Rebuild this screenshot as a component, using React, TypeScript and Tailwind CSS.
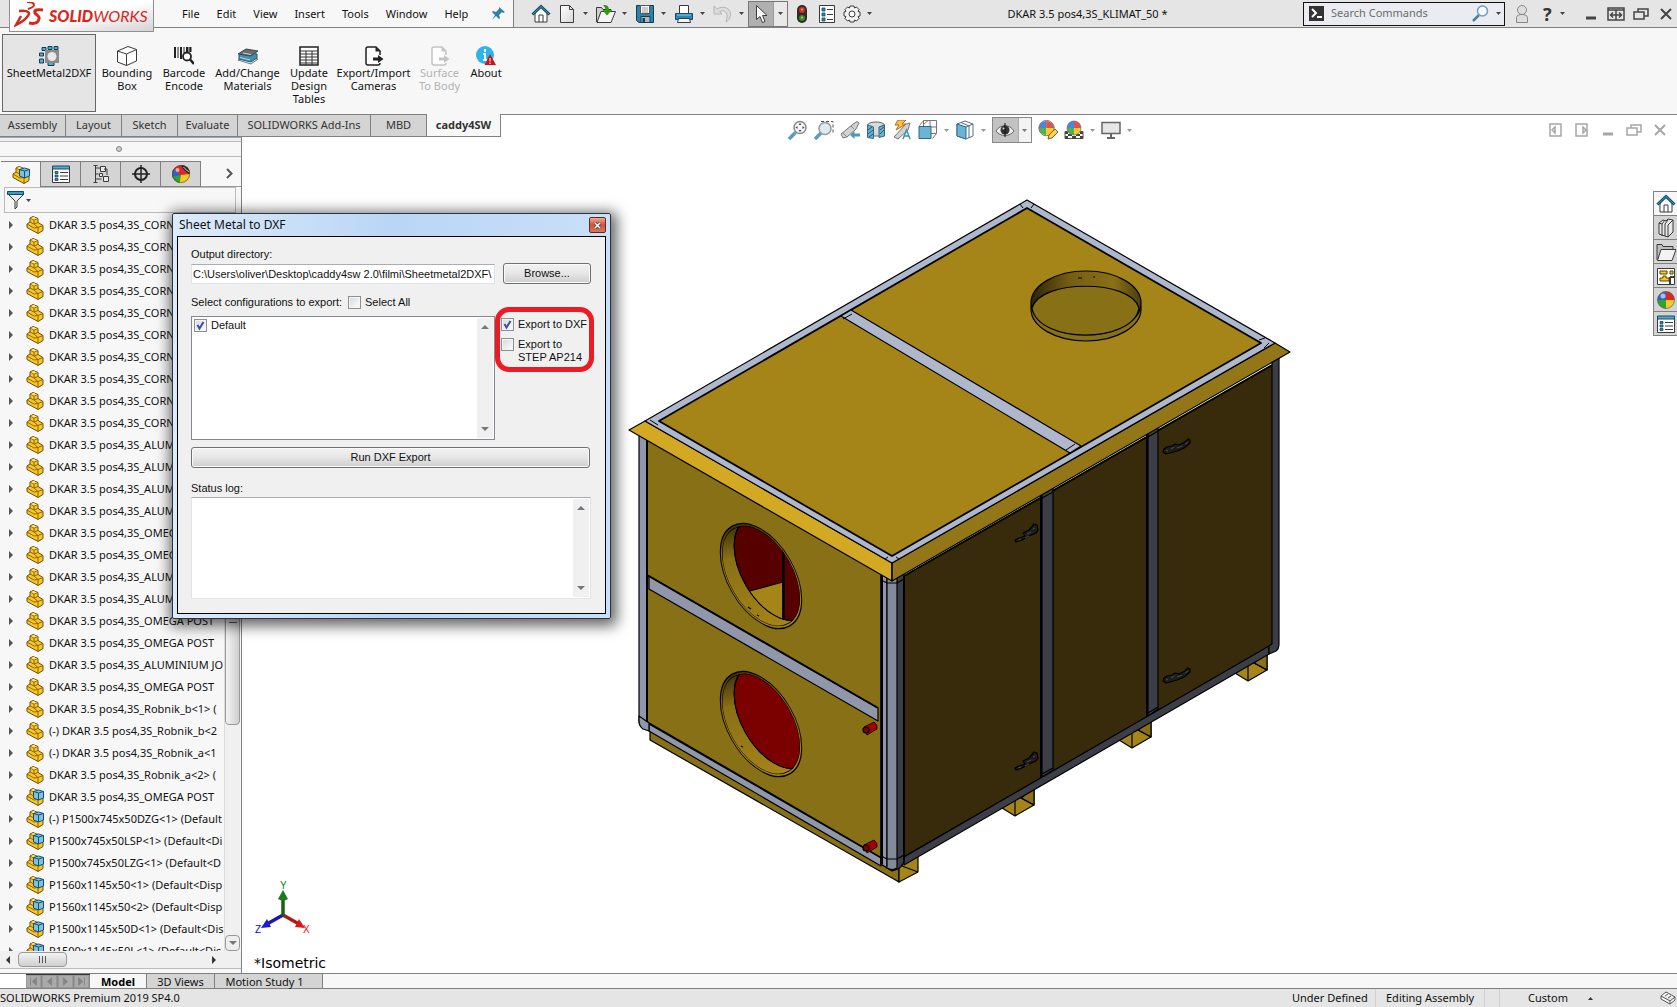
import { ReactNode } from 'react';
import { clsx } from 'clsx';

const line = '#3a3a3a';
const blue = '#2b87b3';

interface IconProps {
  size?: number;
  children: ReactNode;
}

function Icon({ size = 20, children }: IconProps) {
  return (
    <svg width={size} height={size} viewBox="0 0 20 20" fill="none" className="shrink-0" aria-hidden="true">
      {children}
    </svg>
  );
}

function Caret({ color = '#444' }: { color?: string }) {
  return (
    <svg width="5" height="3" viewBox="0 0 5 3" className="shrink-0" aria-hidden="true">
      <path d="M0 0h5L2.500 3z" fill={color} />
    </svg>
  );
}

/* ---------- icons ---------- */

const HomeIcon = () => (
  <Icon>
    <path d="M4 9v9h12V9l-6-6z" fill="#fff" stroke={line} />
    <path d="M8 18v-7h4v7" stroke={line} />
    <path d="M1.500 10.500L10 2.500l8.500 8" stroke="#134b66" strokeWidth="3" />
    <path d="M2 10l8-7.500L18 10" stroke="#3f9ac4" strokeWidth="1" />
  </Icon>
);

const NewIcon = () => (
  <Icon>
    <defs>
      <linearGradient id="paper" x1="0" y1="0" x2="1" y2="1">
        <stop offset="0" stopColor="#fff" />
        <stop offset="1" stopColor="#d8d8d8" />
      </linearGradient>
    </defs>
    <path d="M3.500 1.500h9l4 4v13h-13z" fill="url(#paper)" stroke={line} />
    <path d="M12.500 1.500v4h4" stroke={line} />
  </Icon>
);

const OpenIcon = () => (
  <Icon>
    <path d="M.5 18V3.500h5l1.500 2h8V8" fill="#d0d0d0" stroke={line} />
    <path d="M1 18.500L5 7.500h14.500l-4.500 11z" fill="#f5f5f5" stroke={line} />
    <path d="M7 1c4-.5 6 1 6 5h3l-5 5.500L6.500 6h3c0-2-1-3.500-2.500-5z" fill="#2f9a0c" />
  </Icon>
);

const SaveIcon = () => (
  <Icon>
    <path d="M1.500 1.500h17v17H4l-2.500-2z" fill="#3180a8" stroke="#123e54" />
    <path d="M5.500 1.500h9v8h-9z" fill="#fff" stroke="#555" />
    <path d="M7 4h6M7 6h6M7 8h6" stroke="#999" />
    <path d="M6 12.500h9v6H6z" fill="#a9bcc5" stroke="#123e54" />
    <path d="M7.500 14h2.500v4H7.500z" fill="#123e54" />
  </Icon>
);

const PrintIcon = () => (
  <Icon>
    <path d="M5.500 1.500h9v8h-9z" fill="#fff" stroke={line} />
    <path d="M1.500 9.500h17v6h-17z" fill="#2b87b3" stroke="#174a62" />
    <path d="M3 11h14" stroke="#8ccbe8" />
    <path d="M4.500 14.500h11l1 4h-13z" fill="#f5f5f5" stroke={line} />
  </Icon>
);

const UndoIcon = () => (
  <Icon>
    <path d="M1 2v8h8L6.500 7.500C11 5.500 15 8 14 14l-1 4c5-3 6-10 2-13C11.500 2.500 7 3 4 5z" fill="#dcdcdc" stroke="#b5b5b5" />
  </Icon>
);

const CursorIcon = () => (
  <Icon>
    <path d="M5.500 1.500v14l3.500-3 2.500 6 2.500-1-2.500-6h4.500z" fill="#fff" stroke="#3d3d3d" />
  </Icon>
);

const TrafficIcon = () => (
  <Icon>
    <rect x="5" y="1" width="10" height="18" rx="5" fill="#2c2c2c" />
    <circle cx="10" cy="6" r="3" fill="#d92b1c" />
    <circle cx="10" cy="14" r="3" fill="#3e8a1d" />
    <circle cx="10" cy="5.500" r="1" fill="#ff9b8c" />
    <circle cx="10" cy="13.500" r="1" fill="#9fd97d" />
  </Icon>
);

const OptionsIcon = () => (
  <Icon>
    <path d="M2.500 1.500h15v17h-15z" fill="#fff" stroke={line} />
    <path d="M5 4h3v3H5zM5 9h3v3H5zM5 14h3v3H5z" fill={blue} stroke="#174a62" strokeWidth=".8" />
    <path d="M10 5.500h6M10 10.500h6M10 15.500h6" stroke={line} />
  </Icon>
);

const GearIcon = () => (
  <Icon>
    <path
      d="M8 2h4l.5 2 2-1 2.500 2.500-1 2 2 .5v4l-2 .5 1 2-2.500 2.500-2-1-.5 2H8l-.5-2-2 1L3 14.500l1-2-2-.5V8l2-.5-1-2L5.500 3l2 1z"
      fill="#f2f2f2"
      stroke={line}
    />
    <circle cx="10" cy="10" r="3" stroke={line} fill="#fff" />
  </Icon>
);

const ListIcon = () => (
  <Icon>
    <path d="M1.500 2.500h17v16h-17z" fill="#fff" stroke={line} />
    <path d="M1.500 2h17v3h-17z" fill="#56a9cd" stroke="#174a62" />
    <path d="M4 7.500h3v2H4zM4 11h3v2H4zM4 14.500h3v2H4z" fill={blue} stroke="#174a62" strokeWidth=".8" />
    <path d="M9 8.500h8M9 12h8M9 15.500h8" stroke={line} />
  </Icon>
);

const SphereIcon = () => (
  <Icon>
    <path d="M10 10V1.500A8.500 8.500 0 0 0 1.500 10z" fill="#2f62c9" />
    <path d="M10 10h8.500A8.500 8.500 0 0 0 10 1.500z" fill="#dc2a22" />
    <path d="M10 10H1.500A8.500 8.500 0 0 0 10 18.500z" fill="#2fa52a" />
    <path d="M10 10v8.500a8.500 8.500 0 0 0 8.500-8.500z" fill="#f2cd2a" />
    <circle cx="10" cy="10" r="8.500" stroke="#444" strokeOpacity=".6" />
    <circle cx="7" cy="6" r="2.500" fill="#fff" fillOpacity=".6" />
  </Icon>
);

const AppearanceIcon = () => (
  <Icon>
    <circle cx="10" cy="10" r="9" fill="#dc2a22" />
    <path d="M10 11L2.500 5A9 9 0 0 0 2 14z" fill="#2f62c9" />
    <path d="M10 11l-8.500 2a9 9 0 0 0 7 6z" fill="#2fa52a" />
    <path d="M10 11l-1.500 8A9 9 0 0 0 19 10z" fill="#f2cd2a" />
    <path d="M10 1.500c5-1 9 3 9 8.500-3-1-7-4-9-8.500z" fill="#222" />
    <path d="M12.500 3c2 2.500 4 4 6 5" stroke="#ddd" />
    <circle cx="10" cy="10" r="8.500" stroke="#444" strokeOpacity=".6" />
    <circle cx="6.500" cy="6" r="2" fill="#fff" fillOpacity=".6" />
  </Icon>
);

const TreeIcon = () => (
  <Icon>
    <path d="M4.500 1v18M4.500 4h5M4.500 10h3M4.500 15h6M2.500 1.500h4M2.500 18.500h4" stroke={line} />
    <path d="M9.500 2.500h5v5h-5zM8.500 9.500h3v3h-3zM12.500 12.500h5v5h-5z" fill="#ececec" stroke={line} />
    <path d="M13 5h3v6" stroke={line} />
  </Icon>
);

const TargetIcon = () => (
  <Icon>
    <circle cx="10" cy="10" r="6" stroke="#222" strokeWidth="2" />
    <path d="M10 1v18M1 10h18" stroke="#222" strokeWidth="1.500" />
  </Icon>
);

const PartIcon = ({ assembly = false }: { assembly?: boolean }) => (
  <svg width="18" height="18" viewBox="0 0 18 18" className="shrink-0" aria-hidden="true">
    <path d="M1 8l3-2V2l3-1.500 5 2v4l5 3v5L12 17.500 1 11.500z" fill="#f9c720" stroke="#6b4e0c" />
    <path d="M8 4v4l4 3.500v6" fill="none" stroke="#8a6712" />
    <path d="M4 2l4 2 4-1.500M1 8l7 4 4-.5 5-2M4 6l4 2 4-1.500" fill="none" stroke="#8a6712" />
    <path d="M5 2l2.500-1 3.500 1.500L8 3.500z" fill="#ffe67a" />
    {assembly && (
      <>
        <path d="M7.500 3.500l5-1.500 5 1.500V10L12.500 12l-5-2z" fill="#7cc0e2" stroke="#16506e" />
        <path d="M7.500 3.500l5 1.500 5-1.500M12.500 5v7" fill="none" stroke="#16506e" />
      </>
    )}
  </svg>
);

const SheetMetalIcon = () => (
  <Icon>
    <path d="M3 1.500h4v3H3zM9 .5h4v3H9zM15 .5h4v3h-4zM.5 7h4v3h-4zM.5 13h4v4h-4zM9 16.500h6v3H9z" fill="#56a9cd" stroke="#123e54" />
    <path d="M6 4h14v13H6z" fill="#8b8b8b" />
    <circle cx="13" cy="10.500" r="4.500" fill="#e8e8e8" />
  </Icon>
);

const BoxIcon = () => (
  <Icon>
    <path d="M.5 5L11 .5l8.500 3V15l-10 4.500L.5 16z" fill="#fff" stroke={line} />
    <path d="M.5 5l9 3 10-4.500M9.500 8v11.500" stroke={line} />
  </Icon>
);

const BarcodeIcon = () => (
  <Icon>
    <path d="M1 1v11M7 1v12M13 1v5M16.500 1v5" stroke="#222" strokeWidth="2" />
    <path d="M4 1v11M10 1v6M15 1v5" stroke="#222" />
    <circle cx="13" cy="10.500" r="4" stroke="#222" strokeWidth="1.800" fill="#fff" />
    <path d="M16 13.500l4 4.500" stroke="#222" strokeWidth="2.500" />
  </Icon>
);

const MaterialsIcon = () => (
  <Icon>
    <path d="M0 14l8-4 12 3-7 5z" fill="#f0f0f0" stroke="#777" />
    <path d="M1 9l7-3 11 2v4l-6 4-12-3z" fill="#3f90b5" stroke="#205a75" />
    <path d="M0 8l8-5 12 2-7 5z" fill="#6c6c6c" stroke="#444" />
    <path d="M2 11.500l10 2.500M5 7l8 1.500" stroke="#aaddee" />
  </Icon>
);

const TableIcon = () => (
  <Icon>
    <path d="M1 1h18v18H1z" fill="#fff" stroke="#222" strokeWidth="1.500" />
    <path d="M1 5h18M1 8h18M1 11h18M1 14h18M1 17h18M7 5v14M13 5v14" stroke="#333" />
  </Icon>
);

const ExportIcon = ({ muted = false }: { muted?: boolean }) => {
  const color = muted ? '#c4c4c4' : '#222';
  return (
    <Icon>
      <path d="M16 9V5l-4-4H4a2 2 0 0 0-2 2v14a2 2 0 0 0 2 2h10a2 2 0 0 0 2-2" fill="#fff" stroke={color} strokeWidth="1.500" />
      <path d="M11.500 1v4.500H16z" fill={color} />
      <path d="M9 11.500h5V9l5.500 4-5.500 4v-2.500H9z" fill={color} />
    </Icon>
  );
};

const AboutIcon = () => (
  <Icon>
    <circle cx="9" cy="9" r="9" fill="#2fb4ea" />
    <path d="M9 3v3M7 8h2v6M7 14h4" stroke="#fff" strokeWidth="2" />
    <path d="M14 8l6 11H8.500z" fill="#c5161d" />
    <path d="M14 12v3.500M14 16.500v1.500" stroke="#fff" />
  </Icon>
);

const ZoomFitIcon = () => (
  <Icon>
    <path d="M1 19l6.500-6.500" stroke="#5a9dbd" strokeWidth="3.500" />
    <circle cx="12" cy="7.500" r="6" fill="#f4f8fa" stroke="#888" strokeWidth="1.500" />
    <path d="M12 3l1.500 2h-3zM12 12l1.500-2h-3zM7.500 7.500l2-1.500v3zM16.500 7.500l-2-1.500v3z" fill="#444" />
  </Icon>
);

const ZoomAreaIcon = () => (
  <Icon>
    <path d="M7 1.500h12v12" stroke="#555" strokeDasharray="3 2" />
    <path d="M1 19l6-6" stroke="#5a9dbd" strokeWidth="3.500" />
    <circle cx="11" cy="8.500" r="6" fill="#dcebf2" stroke="#999" strokeWidth="1.500" />
  </Icon>
);

const PreviousViewIcon = () => (
  <Icon>
    <path d="M1 14l11-9 5-3.500 2 1.500-3 6-9 8-4 1z" fill="#d2d2d2" stroke="#777" />
    <path d="M3 13l4 4M11 6l3 3" stroke="#888" />
    <path d="M10 15l4.500-4v2.500H20v3h-5.500V19z" fill="#4b98bd" />
  </Icon>
);

const SectionIcon = () => (
  <Icon>
    <path d="M1.500 5c1-4 16-4 17 0l-5 2v9H7V8z" fill="#d9d9d9" stroke="#666" />
    <path d="M1.500 5l6 2v11.500l-6-1zM13 7l5.500-2v11L13 17.500z" fill="#6fb1d0" stroke="#2d6a88" />
    <path d="M2 10l4-3M2 14l5-4M3 17l4-3M14 10l4-3M14 14l4-4" stroke="#24566e" />
  </Icon>
);

const DynamicIcon = () => (
  <Icon>
    <path d="M2 17L14 4l4-1-2 7-10 9z" fill="#d2d2d2" stroke="#777" />
    <path d="M6 0h8l-4 4h4L4 10l3-5H3z" fill="#f9c33c" stroke="#b8672a" />
    <path d="M11 19l3.500-9 3.500 9M12.500 16h4.500" stroke="#3f90b5" strokeWidth="1.500" />
  </Icon>
);

const OrientationIcon = () => (
  <Icon>
    <path d="M5.500.500h13v13h-13zM1.500 5.500l4-5M14.500 18.500l4-5M12 1v17M6 7h13M10 .5L5 5" stroke="#777" />
    <path d="M1 6.500h12v12H1z" fill="#6db3d6" stroke="#2d6a88" />
  </Icon>
);

const DisplayIcon = () => (
  <Icon>
    <path d="M2 4l8-3 8 3v12l-7 3-9-3z" fill="#fff" stroke="#56707c" />
    <path d="M2 4l9 3v12l-9-3z" fill="#6db3d6" stroke="#2d6a88" />
    <path d="M11 7l7-3M6 2.500L14 6v12" stroke="#56707c" />
  </Icon>
);

const EyeIcon = () => (
  <Icon>
    <path d="M1 11c4-7 14-7 18 0-4 6-14 6-18 0z" fill="#eee" stroke="#666" />
    <circle cx="10" cy="10" r="4.500" fill="#333" />
    <path d="M10 3v14" stroke="#111" />
    <circle cx="8.500" cy="8.500" r="1" fill="#ddd" />
  </Icon>
);

const EditAppearanceIcon = () => (
  <Icon>
    <g transform="scale(.9)">
      <path d="M9 9V1a8 8 0 0 0-8 8z" fill="#4a86e0" />
      <path d="M9 9h9a9 9 0 0 0-9-8z" fill="#e0524b" />
      <path d="M9 9H1a9 9 0 0 0 8 8z" fill="#50b348" />
      <path d="M9 9v8a9 9 0 0 0 9-8z" fill="#f2cd2a" />
      <circle cx="9.500" cy="9" r="8.500" stroke="#666" />
    </g>
    <path d="M10 19l1-4 6-6 3 3-6 6z" fill="#f6d35c" stroke="#8a5a12" />
  </Icon>
);

const SceneIcon = () => (
  <Icon>
    <path d="M1 11.500h18v7H1z" fill="#fff" stroke="#555" />
    <path d="M1 12h3v2H1zM16 12h3v2h-3zM4 14h4v2H4zM12 14h4v2h-4zM1 16h3v3H1zM8 16h4v3H8zM16 16h3v3h-3z" fill="#444" />
    <path d="M10 8V1a7 7 0 0 0-7 7z" fill="#4a86e0" />
    <path d="M10 8h7a7 7 0 0 0-7-7z" fill="#e0524b" />
    <path d="M10 8H3a7 7 0 0 0 7 7z" fill="#50b348" />
    <path d="M10 8v7a7 7 0 0 0 7-7z" fill="#f2cd2a" />
    <circle cx="10" cy="8" r="7" stroke="#666" strokeOpacity=".7" />
  </Icon>
);

const MonitorIcon = () => (
  <Icon>
    <path d="M1 2.500h18v11H1z" fill="#e6e6e6" stroke="#666" strokeWidth="1.500" />
    <path d="M10 14v4M6 18h8" stroke="#666" strokeWidth="2" />
  </Icon>
);

const LibraryIcon = () => (
  <Icon>
    <path d="M3 5l4-3 3 1 2-2 5 1v12l-5 5-9-3z" fill="#e8e8e8" stroke={line} />
    <path d="M3 5l3 1v12M6 6l3-4M9 6v12M9 6l3-4M12 7v12M12 7l5-5" stroke={line} />
  </Icon>
);

const FolderIcon = () => (
  <Icon>
    <path d="M1 18V2.500h5l1 2h10V8" fill="#bdbdbd" stroke={line} />
    <path d="M1.500 18.500L5 7.500h15l-4 11z" fill="#f3f3f3" stroke={line} />
  </Icon>
);

const PaletteIcon = () => (
  <Icon>
    <path d="M1.500 2.500h17v16h-17z" fill="#fff" stroke={line} />
    <path d="M4 5h7v3H4zM14 5h3v3h-3zM4 15h9v-3h-3v-2H7v2H4z" fill="#f4cb25" stroke="#5a4400" />
    <path d="M14 11v7M14 11h4" stroke={line} strokeWidth="2" />
  </Icon>
);

const FilterIcon = () => (
  <Icon>
    <path d="M2 4l7 7v8l2-2v-6l7-7z" fill="#ececec" stroke={line} />
    <path d="M1.500 1.500h16v3h-16z" fill="#3f9ac4" stroke="#174a62" />
  </Icon>
);

const WindowGlyph = ({ kind, color }: { kind: string; color: string }) => (
  <svg width="18" height="16" viewBox="0 0 18 16" fill="none" stroke={color} strokeWidth="1.500" className="shrink-0" aria-hidden="true">
    {kind === 'minimize' && <path d="M4 12h10" strokeWidth="3" />}
    {kind === 'span' && <path d="M1 2h16v12H1zM1 4h16M9 4v10M4 9h10M6 6.500L3.500 9 6 11.500M12 6.500L14.500 9 12 11.500" />}
    {kind === 'restore' && <path d="M6 6V3h10v7h-4M2 6h10v7H2z" />}
    {kind === 'close' && <path d="M4 3l10 10M14 3L4 13" strokeWidth="2" />}
    {kind === 'left' && <path d="M3 2h11v12H3zM8 5v6L5 8z" />}
    {kind === 'right' && <path d="M3 2h11v12H3zM10 5v6l3-3z" />}
  </svg>
);

/* ---------- title bar ---------- */

const menus = ['File', 'Edit', 'View', 'Insert', 'Tools', 'Window', 'Help'];

function Logo() {
  return (
    <div className="absolute top-0 left-[9px] z-10 flex h-8 w-[145px] items-center border border-t-0 border-[#8f8f8f] bg-linear-to-br from-white via-white to-[#d4d4d4] pl-1 text-[#d9261c]">
      <svg width="31" height="28" viewBox="0 0 31 28" fill="none" stroke="currentColor" className="shrink-0" aria-hidden="true">
        <path d="M13 0c4 0 7 1 7 3s-3 3-6 4" strokeWidth="2" />
        <path d="M5 9c10-1 12 2 8 6-3 4-7 6-11 8l5-9" strokeWidth="2.500" />
        <path d="M29 8c-6-1-9 0-8 3 1 2 5 3 4 6-1 4-5 5-10 4" strokeWidth="3" />
      </svg>
      <span className="pl-1 font-['Lato'] text-[16px] leading-5 italic">
        <b className="font-black">SOLID</b>WORKS
      </span>
    </div>
  );
}

function ToolButton({ label, caret, children }: { label: string; caret?: boolean; children: ReactNode }) {
  return (
    <button type="button" aria-label={label} className={clsx('flex items-center', caret ? 'w-[39px] gap-[6px]' : 'w-[26px]')}>
      {children}
      {caret && <Caret />}
    </button>
  );
}

function TitleBar() {
  return (
    <header className="relative flex h-7 shrink-0 items-stretch border-b border-[#808080] bg-[#e5e5e5]">
      <Logo />
      <nav className="ml-[9px] flex w-[505px] shrink-0 items-center gap-[17px] border-r border-[#808080] bg-[#f7f7f7] pl-[173px]">
        {menus.map((menu) => (
          <button type="button" key={menu} className="leading-4">
            {menu}
          </button>
        ))}
        <svg width="14" height="14" viewBox="0 0 14 14" className="mr-2 ml-auto shrink-0" aria-hidden="true">
          <path d="M8 0l6 5-2 1-1-1-3 3 1 3-1 1-3-3-4 4 3-5-3-3 1-1 3 1 3-3z" fill="#2f7fa8" />
        </svg>
      </nav>
      <div className="flex shrink-0 items-center pl-[17px]">
        <ToolButton label="Home"><HomeIcon /></ToolButton>
        <ToolButton label="New" caret><NewIcon /></ToolButton>
        <ToolButton label="Open" caret><OpenIcon /></ToolButton>
        <ToolButton label="Save" caret><SaveIcon /></ToolButton>
        <ToolButton label="Print" caret><PrintIcon /></ToolButton>
        <ToolButton label="Undo" caret><UndoIcon /></ToolButton>
        <button type="button" aria-label="Select" className="-ml-1 flex h-[26px] items-center border border-[#777] bg-[#b0b0b0]">
          <span className="flex w-6 justify-center"><CursorIcon /></span>
          <span className="flex h-full w-[14px] items-center justify-center border-l border-[#999] bg-[#e9e9e9]"><Caret /></span>
        </button>
        <div className="flex items-center gap-[5px] pl-1">
          <TrafficIcon />
          <OptionsIcon />
          <GearIcon />
          <Caret />
        </div>
      </div>
      <h1 className="flex-1 self-center text-center leading-4">DKAR 3.5 pos4,3S_KLIMAT_50 *</h1>
      <div className="flex shrink-0 items-center gap-[7px] pr-[2px]">
        <label className="flex h-6 w-[202px] items-center border border-[#111] bg-[#eaecf1] px-[5px]">
          <svg width="15" height="15" viewBox="0 0 15 15" className="shrink-0" aria-hidden="true">
            <path d="M0 0h15v15H0z" fill="#333" />
            <path d="M3 3l4 4-4 4M8 11h5" fill="none" stroke="#fff" strokeWidth="2" />
          </svg>
          <input
            aria-label="Search Commands"
            placeholder="Search Commands"
            className="ml-[7px] w-[141px] bg-transparent outline-none placeholder:text-[#6b6b6b]"
          />
          <svg width="17" height="17" viewBox="0 0 17 17" fill="none" className="shrink-0" aria-hidden="true">
            <path d="M1 16l6-6" stroke="#4b7fa5" strokeWidth="2.500" />
            <circle cx="10.500" cy="6" r="5" fill="#f6fbff" stroke="#6f9dbd" strokeWidth="1.500" />
          </svg>
          <span className="pl-[7px]"><Caret /></span>
        </label>
        <svg width="20" height="20" viewBox="0 0 20 20" aria-hidden="true" className="shrink-0">
          <circle cx="10" cy="6" r="4.500" fill="#ddd" stroke="#888" />
          <path d="M4.500 18.500v-5c0-4 11-4 11 0v5z" fill="#ddd" stroke="#888" />
        </svg>
        <button type="button" aria-label="Help" className="flex w-9 items-center gap-2 pl-1 text-[18px] leading-5 font-bold text-[#333]">
          ?<Caret />
        </button>
        <button type="button" aria-label="Minimize"><WindowGlyph kind="minimize" color="#444" /></button>
        <button type="button" aria-label="Span displays"><WindowGlyph kind="span" color="#444" /></button>
        <button type="button" aria-label="Restore"><WindowGlyph kind="restore" color="#444" /></button>
        <button type="button" aria-label="Close"><WindowGlyph kind="close" color="#444" /></button>
      </div>
    </header>
  );
}

/* ---------- ribbon ---------- */

const ribbonItems = [
  { lines: ['SheetMetal2DXF'], width: 'w-[94px]', icon: <SheetMetalIcon />, active: true },
  { lines: ['Bounding', 'Box'], width: 'w-[62px]', icon: <BoxIcon /> },
  { lines: ['Barcode', 'Encode'], width: 'w-[52px]', icon: <BarcodeIcon /> },
  { lines: ['Add/Change', 'Materials'], width: 'w-[75px]', icon: <MaterialsIcon /> },
  { lines: ['Update', 'Design', 'Tables'], width: 'w-[48px]', icon: <TableIcon /> },
  { lines: ['Export/Import', 'Cameras'], width: 'w-[81px]', icon: <ExportIcon /> },
  { lines: ['Surface', 'To Body'], width: 'w-[51px]', icon: <ExportIcon muted />, disabled: true },
  { lines: ['About'], width: 'w-[42px]', icon: <AboutIcon /> },
];

function Ribbon() {
  return (
    <div className="flex h-[86px] shrink-0 items-start bg-[#f7f7f7] pt-[6px] pl-[2px]">
      {ribbonItems.map((item) => (
        <button
          type="button"
          key={item.lines[0]}
          disabled={item.disabled}
          className={clsx(
            'flex h-[78px] shrink-0 flex-col items-center border pt-[11px] leading-[13px] whitespace-nowrap',
            item.width,
            item.active ? 'border-[#666] bg-[#e5e5e5]' : 'border-transparent',
            item.disabled && 'text-[#b3b3b3]'
          )}
        >
          {item.icon}
          {item.lines.map((text) => (
            <span key={text}>{text}</span>
          ))}
        </button>
      ))}
    </div>
  );
}

const tabs = [
  { label: 'Assembly', width: 'w-[66px]' },
  { label: 'Layout', width: 'w-[56px]' },
  { label: 'Sketch', width: 'w-[56px]' },
  { label: 'Evaluate', width: 'w-[60px]' },
  { label: 'SOLIDWORKS Add-Ins', width: 'w-[133px]' },
  { label: 'MBD', width: 'w-[56px]' },
];

function RibbonTabs() {
  return (
    <div className="flex h-[23px] shrink-0 whitespace-nowrap text-[#333]">
      {tabs.map((tab) => (
        <button
          type="button"
          key={tab.label}
          className={clsx('shrink-0 border-y border-r border-[#808080] bg-[#d4d4d4]', tab.width)}
        >
          {tab.label}
        </button>
      ))}
      <button type="button" className="w-[74px] shrink-0 border-r border-b border-[#808080] bg-[#f7f7f7] font-bold">
        caddy4SW
      </button>
      <div className="flex-1 border-t border-[#808080] bg-white" />
    </div>
  );
}

/* ---------- feature tree ---------- */

const treeItems = [
  ...Array(10).fill('DKAR 3.5 pos4,3S_CORNER'),
  ...Array(4).fill('DKAR 3.5 pos4,3S_ALUMINIUM'),
  ...Array(2).fill('DKAR 3.5 pos4,3S_OMEGA POST'),
  ...Array(2).fill('DKAR 3.5 pos4,3S_ALUMINIUM'),
  ...Array(2).fill('DKAR 3.5 pos4,3S_OMEGA POST'),
  'DKAR 3.5 pos4,3S_ALUMINIUM JO',
  'DKAR 3.5 pos4,3S_OMEGA POST',
  'DKAR 3.5 pos4,3S_Robnik_b<1> (',
  '(-) DKAR 3.5 pos4,3S_Robnik_b<2',
  '(-) DKAR 3.5 pos4,3S_Robnik_a<1',
  'DKAR 3.5 pos4,3S_Robnik_a<2> (',
  'DKAR 3.5 pos4,3S_OMEGA POST',
  '(-) P1500x745x50DZG<1> (Default',
  'P1500x745x50LSP<1> (Default<Di',
  'P1500x745x50LZG<1> (Default<D',
  'P1560x1145x50<1> (Default<Disp',
  'P1560x1145x50<2> (Default<Disp',
  'P1500x1145x50D<1> (Default<Dis',
  'P1500x1145x50L<1> (Default<Dis',
];

const FIRST_ASSEMBLY = 26;

const panelTabs = [
  { label: 'FeatureManager', icon: <PartIcon assembly /> },
  { label: 'PropertyManager', icon: <ListIcon /> },
  { label: 'ConfigurationManager', icon: <TreeIcon /> },
  { label: 'DimXpertManager', icon: <TargetIcon /> },
  { label: 'DisplayManager', icon: <AppearanceIcon /> },
];

function ScrollArrow({ up = false }: { up?: boolean }) {
  return (
    <svg width="8" height="4" viewBox="0 0 8 4" aria-hidden="true">
      <path d={up ? 'M4 0l4 4H0z' : 'M0 0h8L4 4z'} fill="#777" />
    </svg>
  );
}

function FeaturePanel() {
  return (
    <aside className="flex w-[242px] shrink-0 flex-col border-r border-[#808080] bg-[#f7f7f7]">
      <div className="h-1 shrink-0 border-t border-[#9ab] bg-[#eee]" />
      <div className="flex h-4 shrink-0 items-center justify-center border-y border-[#bbb] pr-1">
        <span className="size-[6px] rounded-full border border-[#888] bg-[#ccc]" />
      </div>
      <div className="mt-1 flex h-[26px] shrink-0 pl-[1px]">
        {panelTabs.map((tab, index) => (
          <button
            type="button"
            key={tab.label}
            aria-label={tab.label}
            className={clsx(
              'flex w-10 items-center justify-center border-t border-r border-[#808080]',
              index === 0 ? 'bg-[#f7f7f7]' : 'border-b bg-[#d4d4d4]'
            )}
          >
            {tab.icon}
          </button>
        ))}
        <div className="flex flex-1 items-center justify-center border-b border-[#999] pl-4">
          <svg width="7" height="11" viewBox="0 0 7 11" aria-hidden="true">
            <path d="M1 1l4.500 4.500L1 10" fill="none" stroke="#555" strokeWidth="2" />
          </svg>
        </div>
      </div>
      <div className="mr-[5px] ml-1 flex h-[26px] shrink-0 items-center border border-[#bbb] pl-[1px]">
        <FilterIcon />
        <Caret />
      </div>
      <div className="flex min-h-0 flex-1">
        <ul className="w-[224px] overflow-hidden pt-[1px]">
          {treeItems.map((item, index) => (
            <li key={index} className="flex h-[22px] items-center pl-[9px] leading-[22px] whitespace-nowrap">
              <svg width="4" height="8" viewBox="0 0 4 8" className="mr-[13px] shrink-0" aria-hidden="true">
                <path d="M0 0l4 4-4 4z" fill="#555" />
              </svg>
              <PartIcon assembly={index >= FIRST_ASSEMBLY} />
              <span className="ml-[5px]">{item}</span>
            </li>
          ))}
        </ul>
        <div className="flex w-4 flex-col justify-between border-l border-[#ddd] bg-[#f0f0f0]">
          <div className="flex h-[512px] items-center justify-center rounded-sm border border-[#999] bg-linear-to-r from-[#f4f4f4] to-[#cfcfcf] pt-[300px]">
            <span className="h-[7px] w-2 border-y border-[#555]" />
          </div>
          <div className="flex h-4 items-center justify-center rounded-sm border border-[#999] bg-[#eee]">
            <ScrollArrow />
          </div>
        </div>
      </div>
      <div className="flex h-[17px] shrink-0 items-center bg-[#f0f0f0] pl-[6px]">
        <svg width="4" height="8" viewBox="0 0 4 8" aria-hidden="true">
          <path d="M4 0L0 4l4 4z" fill="#333" />
        </svg>
        <div className="ml-2 flex h-[15px] w-[49px] items-center justify-center gap-[2px] rounded-sm border border-[#999] bg-linear-to-b from-[#f4f4f4] to-[#cfcfcf]">
          <span className="h-[7px] w-px bg-[#555]" />
          <span className="h-[7px] w-px bg-[#555]" />
          <span className="h-[7px] w-px bg-[#555]" />
        </div>
        <svg width="4" height="8" viewBox="0 0 4 8" className="mr-[25px] ml-auto" aria-hidden="true">
          <path d="M0 0l4 4-4 4z" fill="#333" />
        </svg>
      </div>
      <div className="h-[5px] shrink-0 border-t border-[#bbb]" />
    </aside>
  );
}

/* ---------- graphics area ---------- */

const feet = [
  [1015, 816],
  [1132, 748],
  [1248, 681],
];

const handles = [
  [1163, 438],
  [1163, 667],
];

const latches = [
  [1015, 523],
  [1015, 751],
];

function Duct({ cy, fill, children }: { cy: number; fill: string; children?: ReactNode }) {
  const outer = `matrix(.866 .5 0 1 761 ${cy})`;
  const inner = `matrix(.866 .5 0 1 774 ${cy - 7})`;
  return (
    <g>
      <clipPath id={`outer-${cy}`}>
        <circle r="45" transform={outer} />
      </clipPath>
      <clipPath id={`inner-${cy}`}>
        <circle r="46" transform={inner} />
      </clipPath>
      <circle r="47" transform={outer} fill="url(#collar)" />
      <g clipPath={`url(#outer-${cy})`}>
        <circle r="46" transform={inner} fill={fill} />
        <g clipPath={`url(#inner-${cy})`}>{children}</g>
        <circle r="46" transform={inner} fill="none" />
        <circle r="45" transform={outer} fill="none" />
      </g>
    </g>
  );
}

function Model() {
  return (
    <svg
      width="680"
      height="700"
      viewBox="620 190 680 700"
      className="absolute top-[53px] left-[378px]"
      stroke="#000"
      strokeWidth="1.200"
      strokeLinejoin="round"
      role="img"
      aria-label="Isometric view of the air handling unit"
    >
      <defs>
        <linearGradient id="collar" x1="0" y1="0" x2=".7" y2="1">
          <stop offset="0" stopColor="#2d2408" />
          <stop offset=".15" stopColor="#3c300a" />
          <stop offset=".4" stopColor="#8a7016" />
          <stop offset="1" stopColor="#a68518" />
        </linearGradient>
        <linearGradient id="ring" x1="0" y1="0" x2="1" y2="0">
          <stop offset="0" stopColor="#2d2408" />
          <stop offset=".35" stopColor="#755e12" />
          <stop offset=".75" stopColor="#8a7016" />
          <stop offset="1" stopColor="#4d3e0c" />
        </linearGradient>
      </defs>

      {/* feet and base rail */}
      {feet.map(([x, y]) => (
        <g key={x} transform={`translate(${x} ${y})`}>
          <path d="M-13-8L0 0l19-11v-17L0-24z" fill="#a68518" />
          <path d="M6-18l13-10v17z" fill="#8a7016" />
          <path d="M0 0v-16M6-18l13 7" />
        </g>
      ))}
      <path d="M650 728v12l249 142v-22z" fill="#877016" />
      <path d="M899 882v-17l19-12v19z" fill="#a68518" />
      <path d="M902 866l16 6" />

      {/* left face */}
      <path d="M639 430h10v300l-6-2q-4-2-4-8z" fill="#9097aa" />
      <path d="M647 434l236 140v285L647 722z" fill="#877016" strokeWidth="2" />
      <path d="M649 724l232 134v8L649 731z" fill="#9097aa" />
      <path d="M639 716l10 7v8l-6-2q-4-3-4-8z" fill="#9097aa" />
      <path d="M649 576l229 132v13L649 589z" fill="#9097aa" />
      <path d="M647 575l231 133" strokeWidth="2" />

      <Duct cy={576} fill="#560000">
        <path d="M746 592l37-10v60h-37z" fill="#a68518" />
        <path d="M783.500 550v80" strokeWidth="2.500" />
      </Duct>
      <Duct cy={724} fill="#7b0000" />
      <path d="M748 607l3 2M757 615l2 1M741 746l2 1" />

      {/* right face */}
      <path d="M904 576l370-212v281L904 857z" fill="#372b0b" strokeWidth="2" />
      <path d="M904 857l365-211v8L904 865z" fill="#3c3e47" />
      <path d="M1272 356h7v288q0 5-3 7l-7 3v-8l3-2z" fill="#3c3e47" />
      <path d="M1042 488l11-6v288l-11 7z" fill="#3c3e47" />
      <path d="M1148 426l10-6v289l-10 7z" fill="#3c3e47" />
      <path d="M1041 490v288M1147 428v289" strokeWidth="2" />
      <path d="M1042 498l11-6M1148 437l10-6M1042 774l11-6M1148 713l10-6" />
      {handles.map(([x, y]) => (
        <g key={y} transform={`translate(${x} ${y})`}>
          <path d="M1 11l3-2 5-1 3-2 4 1 6-3 3-3 2 1v3l-6 5-7 3-7 2-4 1-3-2z" fill="#1d1d1b" />
          <path d="M3 12l2 1M8 11l3-2M14 10l5-2M22 6l3-2" stroke="#4b4d52" strokeWidth="1" />
        </g>
      ))}
      {latches.map(([x, y]) => (
        <g key={y} transform={`translate(${x} ${y})`}>
          <path d="M0 17l4-2 6-2-2-3 6-3 5-6 3 1 1 5-2 3-7 3-7 4-6 2z" fill="#1d1d1b" />
          <path d="M3 17l3-1M12 11l4-2M18 6l2-1M10 15l4-2" stroke="#4b4d52" strokeWidth="1" />
        </g>
      ))}

      {/* front post */}
      <path d="M881 574h23v286q0 5-6 9l-6 2-11-7z" fill="#3c3d46" />
      <path d="M881 574h6v294l-6-4z" fill="#9097aa" />
      <path d="M887 574h10v294q-5 3-10 0z" fill="#838b9a" />
      <path d="M882 574v290M904 576v284" strokeWidth="2" />
      <path d="M881 856l6 3h10l7-4M881 580l6 3h10l7-4" fill="none" />

      {/* water pipes */}
      {[732, 850].map((y) => (
        <g key={y}>
          <path d={`M864 ${y - 5}l10-5q4 3 3 7l-10 6z`} fill="#a30000" strokeWidth=".8" />
          <circle cx="866" cy={y - 2} r="3" fill="#7b0000" />
        </g>
      ))}

      {/* roof */}
      <path d="M645 421l247 142v18L629 430z" fill="#d3a924" />
      <path d="M892 563l383-220 15 9-398 229z" fill="#927618" />
      <path d="M1027 200l248 143-383 220-247-142z" fill="#afb7cd" />
      <path d="M1027 208l234 135-369 213-233-135z" fill="#a68518" strokeWidth="1.800" />
      <path d="M841 316l10-6 230 136-11 7z" fill="#afb7cd" />
      <path d="M843 319l9-5M1066 450l9-6M650 420l8 5M1020 204l3 4M1034 204l-3 4M1259 340l6-2M1264 348l5-5M885 559l3-2M899 559l-3-2M892 563v18" strokeWidth="1" />

      {/* roof outlet */}
      <ellipse cx="1086" cy="309" rx="55" ry="32" fill="#877016" />
      <ellipse cx="1086" cy="303" rx="55" ry="32" fill="url(#ring)" />
      <path d="M1032 308c8-29 99-29 107 0-6 36-101 36-107 0z" fill="#877016" />
      <path d="M1078 278h4M1093 277h2" />
    </svg>
  );
}

function Triad() {
  return (
    <svg
      width="60"
      height="60"
      viewBox="0 0 60 60"
      className="absolute bottom-[36px] left-[11px] font-['Liberation_Sans'] text-[10px]"
      aria-label="Axis triad"
    >
      <path d="M30 38l16 9" stroke="#b01818" strokeWidth="3.500" />
      <path d="M30 38l-16 9" stroke="#1818b0" strokeWidth="3.500" />
      <path d="M30 39V20" stroke="#186018" strokeWidth="3.500" />
      <path d="M30 13l5 9q-5 3-10 0z" fill="#1e7a1e" />
      <path d="M52 51l-10-1 4-8z" fill="#d81818" />
      <path d="M8 51l10-1-4-8z" fill="#1c1cd8" />
      <text x="27" y="12" fill="#008a00">Y</text>
      <text x="50" y="56" fill="#f00">X</text>
      <text x="2" y="56" fill="#00f">Z</text>
    </svg>
  );
}

function HeadsUpToolbar() {
  return (
    <div className="absolute inset-x-0 -top-5 flex h-[26px] items-center justify-center gap-[6px]">
      <ZoomFitIcon />
      <ZoomAreaIcon />
      <PreviousViewIcon />
      <SectionIcon />
      <DynamicIcon />
      <OrientationIcon />
      <Caret color="#999" />
      <DisplayIcon />
      <Caret color="#999" />
      <button type="button" aria-label="Hide/Show Items" className="flex h-[26px] items-center border border-[#888] bg-[#c2c2c2]">
        <span className="flex w-[25px] justify-center"><EyeIcon /></span>
        <span className="flex h-full w-[13px] items-center justify-center border-l border-[#aaa] bg-[#f3f3f3]"><Caret color="#777" /></span>
      </button>
      <EditAppearanceIcon />
      <SceneIcon />
      <Caret color="#999" />
      <MonitorIcon />
      <Caret color="#999" />
    </div>
  );
}

const taskPanes = [
  { label: 'Resources', icon: <HomeIcon /> },
  { label: 'Design Library', icon: <LibraryIcon /> },
  { label: 'File Explorer', icon: <FolderIcon /> },
  { label: 'View Palette', icon: <PaletteIcon /> },
  { label: 'Appearances', icon: <SphereIcon /> },
  { label: 'Custom Properties', icon: <ListIcon /> },
];

function GraphicsArea() {
  return (
    <main className="relative min-w-0 flex-1 bg-white">
      <Model />
      <HeadsUpToolbar />
      <div className="absolute -top-[15px] right-2 flex gap-2">
        {['left', 'right', 'minimize', 'restore', 'close'].map((kind) => (
          <button type="button" key={kind} aria-label={`Document ${kind}`}>
            <WindowGlyph kind={kind} color="#a6a6a6" />
          </button>
        ))}
      </div>
      <div className="absolute top-[54px] right-0 flex w-6 flex-col border-t border-l border-[#808080]">
        {taskPanes.map((pane, index) => (
          <button
            type="button"
            key={pane.label}
            aria-label={pane.label}
            className={clsx(
              'flex h-6 items-center justify-center border-b border-[#808080]',
              index === 0 ? 'bg-[#f7f7f7]' : 'bg-[#d4d4d4]'
            )}
          >
            {pane.icon}
          </button>
        ))}
      </div>
      <Triad />
      <p className="absolute bottom-0 left-3 font-['DejaVu_Sans'] text-[14px] leading-5 text-black">*Isometric</p>
    </main>
  );
}

/* ---------- export dialog ---------- */

function CheckBox({ id, label, checked = false }: { id: string; label: ReactNode; checked?: boolean }) {
  return (
    <div className="flex items-start gap-1">
      <span className="grid size-[13px] shrink-0">
        <input
          id={id}
          type="checkbox"
          defaultChecked={checked}
          className="peer col-start-1 row-start-1 size-[13px] appearance-none border border-[#8e8f8f] bg-linear-to-br from-[#d5d8de] to-white shadow-[inset_0_0_0_1px_#f4f4f4]"
        />
        <svg
          viewBox="0 0 13 13"
          className="pointer-events-none invisible relative col-start-1 row-start-1 size-[13px] peer-checked:visible"
          aria-hidden="true"
        >
          <path d="M3.500 6l2 3.500L9.500 3" fill="none" stroke="#3d4f9c" strokeWidth="2" />
        </svg>
      </span>
      <label htmlFor={id} className="leading-[13px]">{label}</label>
    </div>
  );
}

const dialogButton =
  'h-[21px] rounded-[3px] border border-[#707070] bg-linear-to-b from-[#f2f2f2] via-[#e6e6e6] to-[#cfcfcf] shadow-[inset_0_0_0_1px_#fafafa]';

function ScrollTrack() {
  return (
    <div className="flex w-4 shrink-0 flex-col items-center justify-between bg-[#f0f0f0] py-[7px]">
      <ScrollArrow up />
      <ScrollArrow />
    </div>
  );
}

function ExportDialog() {
  return (
    <section
      role="dialog"
      aria-label="Sheet Metal to DXF"
      className="absolute top-[213px] left-[172px] flex h-[406px] w-[439px] flex-col rounded-[2px] border border-[#2b3340] bg-linear-to-r from-[#dcebfa] via-[#b9d6f6] to-[#c9e0f8] px-1 pb-1 shadow-[2px_3px_14px_4px_rgba(0,0,0,0.6)]"
    >
      <div className="flex h-[22px] shrink-0 items-center justify-between pl-[2px]">
        <h2 className="text-[12px] leading-4">Sheet Metal to DXF</h2>
        <button
          type="button"
          aria-label="Close dialog"
          className="flex h-4 w-[17px] items-center justify-center rounded-[2px] border border-[#5e2a24] bg-linear-to-b from-[#eda694] via-[#d2503a] to-[#d9765c]"
        >
          <svg width="7" height="7" viewBox="0 0 7 7" aria-hidden="true">
            <path d="M1 1l5 5M6 1L1 6" stroke="#444" strokeWidth="3" />
            <path d="M1 1l5 5M6 1L1 6" stroke="#fff" strokeWidth="1.500" />
          </svg>
        </button>
      </div>
      <div className="flex flex-1 flex-col border border-black bg-[#f0f0f0] px-[13px] pt-[11px] font-['Liberation_Sans'] text-[11px] leading-[13px]">
        <label htmlFor="output">Output directory:</label>
        <div className="mt-[2px] flex items-center gap-2">
          <input
            id="output"
            defaultValue={'C:\\Users\\oliver\\Desktop\\caddy4sw 2.0\\filmi\\Sheetmetal2DXF\\'}
            className="h-5 w-[304px] border border-[#e0e3e8] border-t-[#abadb3] bg-white px-[1px] outline-none"
          />
          <button type="button" className={clsx('w-[88px]', dialogButton)}>Browse...</button>
        </div>
        <div className="mt-3 flex gap-[6px]">
          <span>Select configurations to export:</span>
          <CheckBox id="all" label="Select All" />
        </div>
        <div className="mt-[7px] flex items-start">
          <div className="flex h-[124px] w-[304px] shrink-0 justify-between border border-[#828790] bg-white p-[1px]">
            <div className="pt-[1px] pl-[1px]">
              <CheckBox id="default" label="Default" checked />
            </div>
            <ScrollTrack />
          </div>
          <div className="-mt-[9px] flex h-[65px] w-[99px] shrink-0 flex-col gap-[7px] rounded-[14px] border-[5px] border-[#ed1c24] pt-[6px] pl-[1px] whitespace-nowrap">
            <CheckBox id="dxf" label="Export to DXF" checked />
            <CheckBox id="step" label={<>Export to<br />STEP AP214</>} />
          </div>
        </div>
        <button type="button" className={clsx('mt-[7px] w-[399px] shrink-0', dialogButton)}>Run DXF Export</button>
        <label htmlFor="log" className="mt-[14px]">Status log:</label>
        <div className="mt-[2px] flex h-[102px] w-[400px] shrink-0 border border-[#e0e3e8] border-t-[#abadb3] bg-white p-[1px]">
          <textarea id="log" className="min-w-0 flex-1 resize-none overflow-hidden outline-none" />
          <ScrollTrack />
        </div>
      </div>
    </section>
  );
}

/* ---------- bottom bars ---------- */

function SheetTabs() {
  return (
    <div className="flex h-4 shrink-0 border-y border-[#808080] bg-[#f7f7f7] leading-[13px] whitespace-nowrap">
      <div className="w-[26px] bg-white" />
      <div className="flex w-16 shrink-0 gap-px border-t border-[#333] bg-[#888]">
        {['M4 2v9M11 2L6 6.500l5 4.500z', 'M10 2L5 6.500l5 4.500z', 'M5 2l5 4.500L5 11z', 'M11 2v9M4 2l5 4.500L4 11z'].map((d) => (
          <svg key={d} width="15" height="13" viewBox="0 0 15 13" className="border border-[#999] bg-[#aaa]" aria-hidden="true">
            <path d={d} fill="#858585" stroke="#858585" />
          </svg>
        ))}
      </div>
      <button type="button" className="w-[57px] border-r border-[#808080] bg-[#f7f7f7] font-bold text-black">Model</button>
      <button type="button" className="w-[68px] border-r border-[#808080] bg-[#d4d4d4]">3D Views</button>
      <button type="button" className="w-[108px] border-r border-[#808080] bg-[#d4d4d4] pr-2">Motion Study 1</button>
    </div>
  );
}

function StatusBar() {
  return (
    <footer className="flex h-[18px] shrink-0 items-center bg-[#e5e5e5] leading-[18px] whitespace-nowrap">
      <span className="flex-1">SOLIDWORKS Premium 2019 SP4.0</span>
      <span className="w-[84px] border-r border-[#d0d0d0]">Under Defined</span>
      <span className="w-[109px] border-r border-[#d0d0d0] pl-[10px]">Editing Assembly</span>
      <span className="w-[15px] border-r border-[#d0d0d0]">&nbsp;</span>
      <span className="flex w-16 items-center justify-between pl-7 whitespace-nowrap">Custom</span>
      <svg width="5" height="3" viewBox="0 0 5 3" className="ml-6" aria-hidden="true">
        <path d="M0 3h5L2.500 0z" fill="#333" />
      </svg>
      <svg width="16" height="14" viewBox="0 0 16 14" fill="#fff" stroke="#555" className="mr-[1px] ml-[67px]" aria-hidden="true">
        <path d="M1 5l5-4 9 5v3l-5 4-9-5zM1 5l9 5 5-4M10 10v3" />
        <path d="M5 5l3-2M8 7l3-2" />
      </svg>
    </footer>
  );
}

export default function App() {
  return (
    <div className="relative flex h-screen flex-col overflow-hidden bg-white font-['Noto_Sans',sans-serif] text-[11px] text-[#111]">
      <TitleBar />
      <Ribbon />
      <RibbonTabs />
      <div className="flex min-h-0 flex-1">
        <FeaturePanel />
        <GraphicsArea />
      </div>
      <SheetTabs />
      <StatusBar />
      <ExportDialog />
    </div>
  );
}
